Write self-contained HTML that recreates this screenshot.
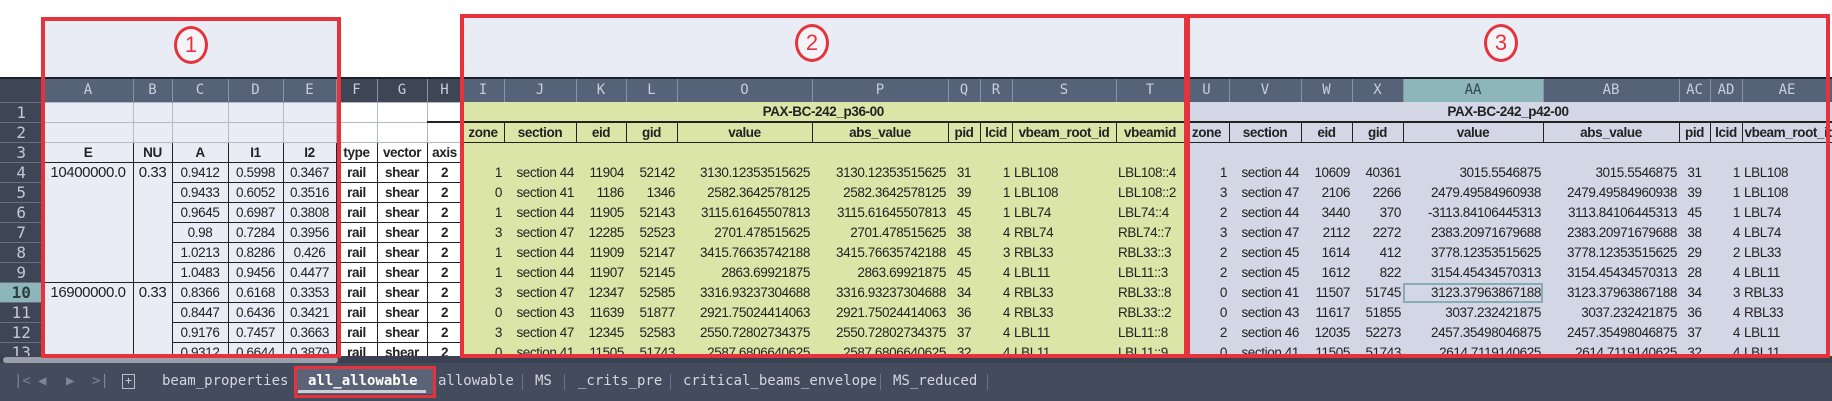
<!DOCTYPE html>
<html><head><meta charset="utf-8"><style>
*{margin:0;padding:0;box-sizing:border-box}
body{width:1832px;height:401px;background:#fff;position:relative;overflow:hidden;font-family:"Liberation Sans Narrow","Liberation Sans",sans-serif}
#sheet{position:absolute;left:0;top:77px;width:1832px;height:281px;overflow:hidden;background:#3a4150;border-top:2px solid #1d2029}
table{border-collapse:collapse;table-layout:fixed;width:1832px}
td{height:20px;font-size:13.5px;letter-spacing:-0.4px;color:#222;white-space:nowrap;overflow:hidden;padding:0 2px;line-height:19px}
tr.ch td{height:23px;background:#556278;color:#c9ceda;font-family:"DejaVu Sans Mono",monospace;font-size:14px;letter-spacing:0;text-align:center;border-right:1px solid #8a93a5}
tr.ch td.d{background:#3e4656}
tr.ch td.sel{background:#8cb6b9;color:#33464a}
tr.ch td.rh{background:#3e4656}
td.rh{background:#3e4656;color:#c3c8d3;font-family:"DejaVu Sans Mono",monospace;font-size:16px;letter-spacing:0;text-align:center;border-bottom:1px solid #687085;border-right:1px solid #222}
td.rh.s{background:#8cb6b9;color:#2c4044;font-weight:bold}
.l{background:#e9ecf5}
.w{background:#fff}
.g{background:#dce5a8}
.v{background:#d2d6e5}
.gl{border:1px solid #b5b9c6}
.bk{border:1px solid #222}
.b{font-weight:bold;text-align:center}
.c{text-align:center}
.r{text-align:right}
.hd{border-top:2px solid #222;border-bottom:1px solid #222;border-right:1px solid #222;font-weight:bold;text-align:center}
.box{position:absolute;border:4px solid #e5323d;pointer-events:none}
.fill{position:absolute;background:#e9ecf5}
.circ{position:absolute;width:34px;height:38px;border:3px solid #e5323d;border-radius:50%;color:#e5323d;font-size:22px;text-align:center;line-height:32px;background:#f3f4f8}
#sb{position:absolute;left:0;top:356px;width:1832px;height:8px;background:#3a4150}
#thumb{position:absolute;left:3px;top:357px;width:335px;height:6px;background:#9aa0ac;border-radius:3px}
#tabs{position:absolute;left:0;top:363px;width:1832px;height:38px;background:#434b5c;font-family:"DejaVu Sans Mono",monospace;font-size:14px;color:#d3d7e0}
#tabs span{position:absolute;top:10px}
.sep{position:absolute;top:11px;width:1px;height:16px;background:#6c7487}
</style></head><body>
<div class="fill" style="left:41px;top:17px;width:300px;height:62px"></div>
<div class="fill" style="left:462px;top:14px;width:1367px;height:65px"></div>
<div id="sheet">
<table>
<colgroup><col style="width:43px"><col style="width:90px"><col style="width:39px"><col style="width:56px"><col style="width:55px"><col style="width:53px"><col style="width:41px"><col style="width:50px"><col style="width:35px"><col style="width:42px"><col style="width:72px"><col style="width:50px"><col style="width:51px"><col style="width:135px"><col style="width:136px"><col style="width:32px"><col style="width:32px"><col style="width:104px"><col style="width:68px"><col style="width:45px"><col style="width:72px"><col style="width:51px"><col style="width:51px"><col style="width:140px"><col style="width:136px"><col style="width:31px"><col style="width:32px"><col style="width:90px"></colgroup>
<tr class="ch"><td class="rh"></td><td>A</td><td>B</td><td>C</td><td>D</td><td>E</td><td class="d">F</td><td class="d">G</td><td class="d">H</td><td>I</td><td>J</td><td>K</td><td>L</td><td>O</td><td>P</td><td>Q</td><td>R</td><td>S</td><td>T</td><td>U</td><td>V</td><td>W</td><td>X</td><td class="sel">AA</td><td>AB</td><td>AC</td><td>AD</td><td>AE</td></tr>
<tr><td class="rh">1</td><td class="l gl"></td><td class="l gl"></td><td class="l gl"></td><td class="l gl"></td><td class="l gl"></td><td class="w gl"></td><td class="w gl"></td><td class="w gl" style="border-bottom:2px solid #222"></td><td class="g b" colspan="10">PAX-BC-242_p36-00</td><td class="v b" colspan="9">PAX-BC-242_p42-00</td></tr>
<tr><td class="rh">2</td><td class="l gl"></td><td class="l gl"></td><td class="l gl"></td><td class="l gl"></td><td class="l gl"></td><td class="w gl"></td><td class="w gl"></td><td class="w gl"></td><td class="g hd">zone</td><td class="g hd">section</td><td class="g hd">eid</td><td class="g hd">gid</td><td class="g hd">value</td><td class="g hd">abs_value</td><td class="g hd">pid</td><td class="g hd">lcid</td><td class="g hd">vbeam_root_id</td><td class="g hd">vbeamid</td><td class="v hd">zone</td><td class="v hd">section</td><td class="v hd">eid</td><td class="v hd">gid</td><td class="v hd">value</td><td class="v hd">abs_value</td><td class="v hd">pid</td><td class="v hd">lcid</td><td class="v hd" style="text-align:left">vbeam_root_id</td></tr>
<tr><td class="rh">3</td><td class="l bk b">E</td><td class="l bk b">NU</td><td class="l bk b">A</td><td class="l bk b">I1</td><td class="l bk b">I2</td><td class="w bk b">type</td><td class="w bk b">vector</td><td class="w bk b">axis</td><td class="g" colspan="10"></td><td class="v" colspan="9"></td></tr>
<tr><td class="rh">4</td><td class="l bk b" rowspan="6" style="vertical-align:top;font-weight:normal;font-size:15px">10400000.0</td><td class="l bk b" rowspan="6" style="vertical-align:top;font-weight:normal;font-size:15px">0.33</td><td class="l bk c">0.9412</td><td class="l bk c">0.5998</td><td class="l bk c">0.3467</td><td class="w bk b">rail</td><td class="w bk b">shear</td><td class="w bk b">2</td><td class="g r">1</td><td class="g r">section 44</td><td class="g r">11904</td><td class="g r">52142</td><td class="g r">3130.12353515625</td><td class="g r">3130.12353515625</td><td class="g c">31</td><td class="g r">1</td><td class="g">LBL108</td><td class="g">LBL108::4</td><td class="v r">1</td><td class="v r">section 44</td><td class="v r">10609</td><td class="v r">40361</td><td class="v r">3015.5546875</td><td class="v r">3015.5546875</td><td class="v c">31</td><td class="v r">1</td><td class="v">LBL108</td></tr>
<tr><td class="rh">5</td><td class="l bk c">0.9433</td><td class="l bk c">0.6052</td><td class="l bk c">0.3516</td><td class="w bk b">rail</td><td class="w bk b">shear</td><td class="w bk b">2</td><td class="g r">0</td><td class="g r">section 41</td><td class="g r">1186</td><td class="g r">1346</td><td class="g r">2582.3642578125</td><td class="g r">2582.3642578125</td><td class="g c">39</td><td class="g r">1</td><td class="g">LBL108</td><td class="g">LBL108::2</td><td class="v r">3</td><td class="v r">section 47</td><td class="v r">2106</td><td class="v r">2266</td><td class="v r">2479.49584960938</td><td class="v r">2479.49584960938</td><td class="v c">39</td><td class="v r">1</td><td class="v">LBL108</td></tr>
<tr><td class="rh">6</td><td class="l bk c">0.9645</td><td class="l bk c">0.6987</td><td class="l bk c">0.3808</td><td class="w bk b">rail</td><td class="w bk b">shear</td><td class="w bk b">2</td><td class="g r">1</td><td class="g r">section 44</td><td class="g r">11905</td><td class="g r">52143</td><td class="g r">3115.61645507813</td><td class="g r">3115.61645507813</td><td class="g c">45</td><td class="g r">1</td><td class="g">LBL74</td><td class="g">LBL74::4</td><td class="v r">2</td><td class="v r">section 44</td><td class="v r">3440</td><td class="v r">370</td><td class="v r">-3113.84106445313</td><td class="v r">3113.84106445313</td><td class="v c">45</td><td class="v r">1</td><td class="v">LBL74</td></tr>
<tr><td class="rh">7</td><td class="l bk c">0.98</td><td class="l bk c">0.7284</td><td class="l bk c">0.3956</td><td class="w bk b">rail</td><td class="w bk b">shear</td><td class="w bk b">2</td><td class="g r">3</td><td class="g r">section 47</td><td class="g r">12285</td><td class="g r">52523</td><td class="g r">2701.478515625</td><td class="g r">2701.478515625</td><td class="g c">38</td><td class="g r">4</td><td class="g">RBL74</td><td class="g">RBL74::7</td><td class="v r">3</td><td class="v r">section 47</td><td class="v r">2112</td><td class="v r">2272</td><td class="v r">2383.20971679688</td><td class="v r">2383.20971679688</td><td class="v c">38</td><td class="v r">4</td><td class="v">LBL74</td></tr>
<tr><td class="rh">8</td><td class="l bk c">1.0213</td><td class="l bk c">0.8286</td><td class="l bk c">0.426</td><td class="w bk b">rail</td><td class="w bk b">shear</td><td class="w bk b">2</td><td class="g r">1</td><td class="g r">section 44</td><td class="g r">11909</td><td class="g r">52147</td><td class="g r">3415.76635742188</td><td class="g r">3415.76635742188</td><td class="g c">45</td><td class="g r">3</td><td class="g">RBL33</td><td class="g">RBL33::3</td><td class="v r">2</td><td class="v r">section 45</td><td class="v r">1614</td><td class="v r">412</td><td class="v r">3778.12353515625</td><td class="v r">3778.12353515625</td><td class="v c">29</td><td class="v r">2</td><td class="v">LBL33</td></tr>
<tr><td class="rh">9</td><td class="l bk c">1.0483</td><td class="l bk c">0.9456</td><td class="l bk c">0.4477</td><td class="w bk b">rail</td><td class="w bk b">shear</td><td class="w bk b">2</td><td class="g r">1</td><td class="g r">section 44</td><td class="g r">11907</td><td class="g r">52145</td><td class="g r">2863.69921875</td><td class="g r">2863.69921875</td><td class="g c">45</td><td class="g r">4</td><td class="g">LBL11</td><td class="g">LBL11::3</td><td class="v r">2</td><td class="v r">section 45</td><td class="v r">1612</td><td class="v r">822</td><td class="v r">3154.45434570313</td><td class="v r">3154.45434570313</td><td class="v c">28</td><td class="v r">4</td><td class="v">LBL11</td></tr>
<tr><td class="rh s">10</td><td class="l bk b" rowspan="4" style="vertical-align:top;font-weight:normal;font-size:15px">16900000.0</td><td class="l bk b" rowspan="4" style="vertical-align:top;font-weight:normal;font-size:15px">0.33</td><td class="l bk c">0.8366</td><td class="l bk c">0.6168</td><td class="l bk c">0.3353</td><td class="w bk b">rail</td><td class="w bk b">shear</td><td class="w bk b">2</td><td class="g r">3</td><td class="g r">section 47</td><td class="g r">12347</td><td class="g r">52585</td><td class="g r">3316.93237304688</td><td class="g r">3316.93237304688</td><td class="g c">34</td><td class="g r">4</td><td class="g">RBL33</td><td class="g">RBL33::8</td><td class="v r">0</td><td class="v r">section 41</td><td class="v r">11507</td><td class="v r">51745</td><td class="v r" style="outline:2px solid #86aeb2;outline-offset:-2px">3123.37963867188</td><td class="v r">3123.37963867188</td><td class="v c">34</td><td class="v r">3</td><td class="v">RBL33</td></tr>
<tr><td class="rh">11</td><td class="l bk c">0.8447</td><td class="l bk c">0.6436</td><td class="l bk c">0.3421</td><td class="w bk b">rail</td><td class="w bk b">shear</td><td class="w bk b">2</td><td class="g r">0</td><td class="g r">section 43</td><td class="g r">11639</td><td class="g r">51877</td><td class="g r">2921.75024414063</td><td class="g r">2921.75024414063</td><td class="g c">36</td><td class="g r">4</td><td class="g">RBL33</td><td class="g">RBL33::2</td><td class="v r">0</td><td class="v r">section 43</td><td class="v r">11617</td><td class="v r">51855</td><td class="v r">3037.232421875</td><td class="v r">3037.232421875</td><td class="v c">36</td><td class="v r">4</td><td class="v">RBL33</td></tr>
<tr><td class="rh">12</td><td class="l bk c">0.9176</td><td class="l bk c">0.7457</td><td class="l bk c">0.3663</td><td class="w bk b">rail</td><td class="w bk b">shear</td><td class="w bk b">2</td><td class="g r">3</td><td class="g r">section 47</td><td class="g r">12345</td><td class="g r">52583</td><td class="g r">2550.72802734375</td><td class="g r">2550.72802734375</td><td class="g c">37</td><td class="g r">4</td><td class="g">LBL11</td><td class="g">LBL11::8</td><td class="v r">2</td><td class="v r">section 46</td><td class="v r">12035</td><td class="v r">52273</td><td class="v r">2457.35498046875</td><td class="v r">2457.35498046875</td><td class="v c">37</td><td class="v r">4</td><td class="v">LBL11</td></tr>
<tr><td class="rh">13</td><td class="l bk c">0.9312</td><td class="l bk c">0.6644</td><td class="l bk c">0.3879</td><td class="w bk b">rail</td><td class="w bk b">shear</td><td class="w bk b">2</td><td class="g r">0</td><td class="g r">section 41</td><td class="g r">11505</td><td class="g r">51743</td><td class="g r">2587.6806640625</td><td class="g r">2587.6806640625</td><td class="g c">32</td><td class="g r">4</td><td class="g">LBL11</td><td class="g">LBL11::9</td><td class="v r">0</td><td class="v r">section 41</td><td class="v r">11505</td><td class="v r">51743</td><td class="v r">2614.7119140625</td><td class="v r">2614.7119140625</td><td class="v c">32</td><td class="v r">4</td><td class="v">LBL11</td></tr>
</table>
</div>
<div id="sb"></div><div id="thumb"></div>
<div id="tabs">
<span style="left:14px;color:#7d8596">|&lt;</span><span style="left:38px;color:#7d8596">◀</span><span style="left:66px;color:#7d8596">▶</span><span style="left:92px;color:#7d8596">&gt;|</span>
<span style="left:122px;width:13px;height:15px;border:1px solid #b8bdc8;top:11px;font-size:11px;line-height:12px;text-align:center">+</span>
<span style="left:162px">beam_properties</span>
<div style="position:absolute;left:296px;top:5px;width:138px;height:26px;background:#5a6377"></div>
<div style="position:absolute;left:298px;top:27px;width:128px;height:3px;background:#c9ced9"></div>
<span style="left:308px;font-weight:bold;color:#fff">all_allowable</span>
<span style="left:438px">allowable</span><div class="sep" style="left:522px"></div>
<span style="left:535px">MS</span><div class="sep" style="left:564px"></div>
<span style="left:578px">_crits_pre</span><div class="sep" style="left:670px"></div>
<span style="left:683px">critical_beams_envelope</span><div class="sep" style="left:880px"></div>
<span style="left:893px">MS_reduced</span><div class="sep" style="left:987px"></div>
</div>
<div class="box" style="left:41px;top:17px;width:300px;height:341px"></div>
<div class="box" style="left:460px;top:14px;width:728px;height:344px"></div>
<div class="box" style="left:1186px;top:14px;width:644px;height:344px"></div>
<div class="box" style="left:294px;top:366px;width:142px;height:32px;border-width:3px"></div>
<div class="circ" style="left:174px;top:26px">1</div>
<div class="circ" style="left:795px;top:24px">2</div>
<div class="circ" style="left:1484px;top:24px">3</div>
</body></html>
